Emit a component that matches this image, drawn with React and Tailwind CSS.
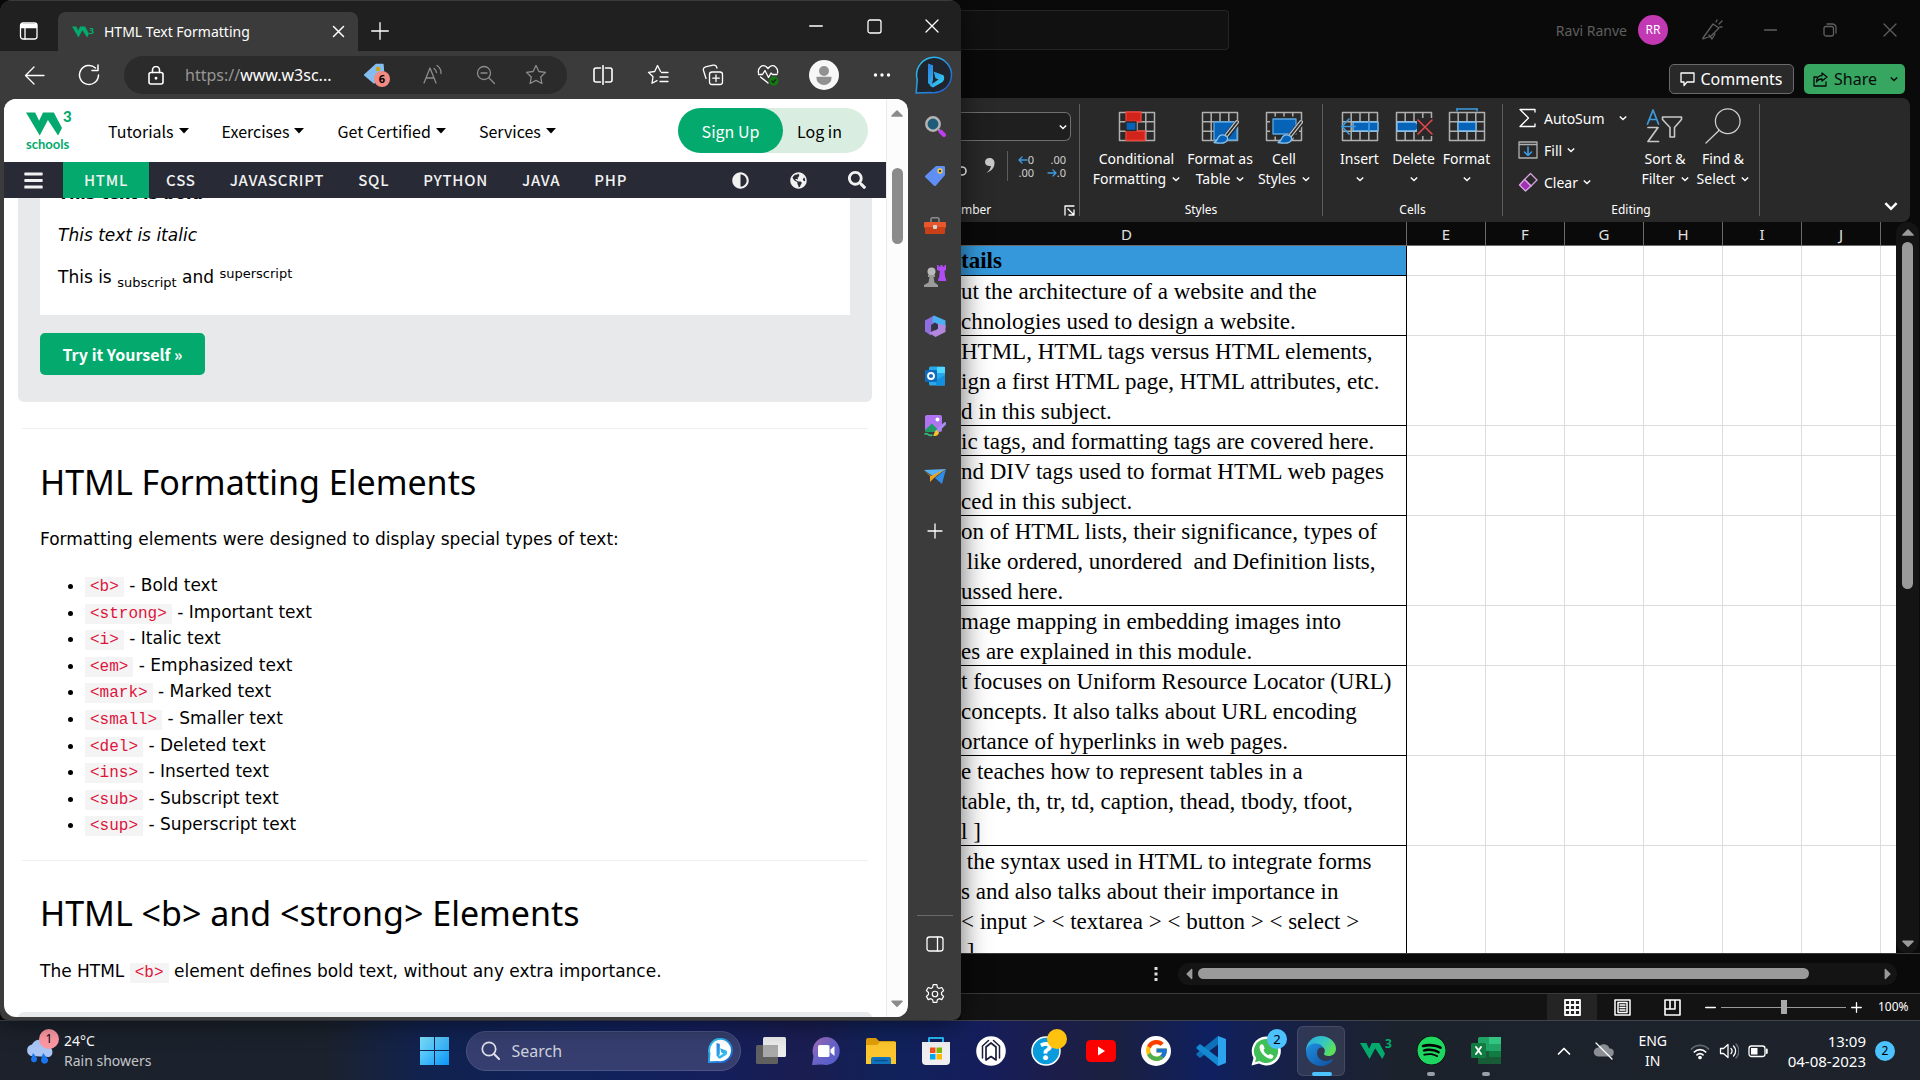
import React from "react";
import { FaAdjust, FaGlobeAmericas, FaSearch, FaBars, FaCaretDown, FaSpotify, FaCaretUp, FaCaretLeft, FaCaretRight } from "react-icons/fa";
import { FcGoogle } from "react-icons/fc";

function Svg({ w = 20, h, vb, children, className = "" }) {
  return (
    <svg width={w} height={h || w} viewBox={vb || `0 0 ${w} ${h || w}`} fill="none" stroke="currentColor" strokeWidth="1.3" strokeLinecap="round" strokeLinejoin="round" className={"shrink-0 " + className} aria-hidden="true">
      {children}
    </svg>
  );
}

function Chevron({ w = 8 }) {
  return (
    <svg width={w} height={w} viewBox="0 0 8 8" fill="none" stroke="currentColor" strokeWidth="1.4" className="inline-block shrink-0" aria-hidden="true">
      <path d="M.8 2.4 4 5.6 7.2 2.4" />
    </svg>
  );
}

function W3Mark({ w, h }) {
  return (
    <svg width={w} height={h} viewBox="0 0 110 72" aria-hidden="true" className="shrink-0">
      <path fill="#04aa6d" d="M0 1h28l12 25L52 1h33l25 47-12 23-31-47-25 47z" />
    </svg>
  );
}

/* ---------- Browser window ---------- */

function TitleBar() {
  return (
    <div className="flex h-[51px] items-end border-t border-[#3a3a3a] bg-[#202020]">
      <button aria-label="Tab actions" className="flex h-10 w-[58px] items-center justify-center">
        <Svg w={20}>
          <rect x="1.5" y="2" width="16.5" height="16" rx="2.5" />
          <path d="M2 3.5h15.5v3H2z" fill="currentColor" />
          <path d="M6 7v11" />
        </Svg>
      </button>
      <div className="flex h-[39px] w-[300px] items-center rounded-t-lg bg-[#3b3b3b] pr-2 pl-[14px]">
        <span className="flex w-8 items-start">
          <W3Mark w={17} h={12} />
          <span className="text-[9px] leading-[9px] font-bold text-[#04aa6d]">3</span>
        </span>
        <span className="flex-1 text-[14px]">HTML Text Formatting</span>
        <button aria-label="Close tab" className="px-1">
          <Svg w={15}><path d="M2.5 2.5l10 10M12.5 2.5l-10 10" strokeWidth="1.5" /></Svg>
        </button>
      </div>
      <button aria-label="New tab" className="flex h-10 w-[43px] items-center justify-center">
        <Svg w={18}><path d="M9 .7v16.6M.7 9h16.6" /></Svg>
      </button>
      <div className="ml-auto flex h-full">
        <button aria-label="Minimize" className="flex w-[58px] items-center justify-center">
          <Svg w={14}><path d="M.7 7h12.6" /></Svg>
        </button>
        <button aria-label="Maximize" className="flex w-[58px] items-center justify-center">
          <Svg w={15}><rect x="1" y="1" width="13" height="13" rx="2" /></Svg>
        </button>
        <button aria-label="Close" className="flex w-[58px] items-center justify-center">
          <Svg w={14}><path d="M1 1l12 12M13 1L1 13" /></Svg>
        </button>
      </div>
    </div>
  );
}

function BingBubble({ w, light }) {
  return (
    <svg width={w} height={w} viewBox="0 0 38 38" aria-hidden="true" className="shrink-0">
      <defs>
        <linearGradient id="bing-ring" x1="0" y1="0" x2="1" y2="1">
          <stop offset="0" stopColor="#2fd0f5" />
          <stop offset="1" stopColor="#1b55c9" />
        </linearGradient>
        <linearGradient id="bing-b" x1="0" y1="0" x2="1" y2="1">
          <stop offset="0" stopColor="#2a7de1" />
          <stop offset="1" stopColor="#35d3f3" />
        </linearGradient>
      </defs>
      <path d="M19.5 1.2A17.8 17.8 0 1 1 15 36.4L1.2 37l1-13.500A17.8 17.8 0 0 1 19.5 1.2z" fill={light ? "#fff" : "#20242c"} stroke="url(#bing-ring)" strokeWidth={light ? 3 : 1.5} />
      <path d="M13 7.5l5 1.8v14.500l-1.500 6L13 27.200zM18.500 15.500l10 3.800c1.500 3.500.5 5.500-1.500 7L18 31.500l-3.500-2 9-6-3-1.200z" fill="url(#bing-b)" />
    </svg>
  );
}

function Toolbar() {
  return (
    <div className="flex h-12 items-center">
      <button aria-label="Back" className="flex w-[68px] justify-center">
        <Svg w={21}><path d="M20 10.500H1.500M10 2l-8.500 8.500L10 19" /></Svg>
      </button>
      <button aria-label="Refresh" className="flex w-[42px] justify-center">
        <Svg w={22}><path d="M20.500 11a9.500 9.500 0 1 1-3-7M20 1v5.500h-6" strokeWidth="1.500" /></Svg>
      </button>
      <div className="ml-[14px] flex h-[38px] flex-1 items-center rounded-full bg-[#2b2b2b] pr-[20px] pl-6">
        <Svg w={16} h={19} vb="0 0 16 19"><rect x="1" y="6.500" width="14" height="11.500" rx="2" strokeWidth="1.600" /><path d="M4.500 6.500V4a3.500 3.500 0 0 1 7 0v2.500" strokeWidth="1.600" /><circle cx="8" cy="12.300" r=".8" fill="currentColor" /></Svg>
        <label className="ml-[21px] flex min-w-0 flex-1 text-[16px]">
          <span className="text-[#969696]">https://</span>
          <input aria-label="Address" defaultValue="www.w3sc..." className="w-[110px] min-w-0 bg-transparent text-white outline-none" />
        </label>
        <span className="flex items-center gap-[35px] text-[#8c8c8c]">
          <button aria-label="Coupons" className="relative">
            <Svg w={24}>
              <path d="M13 1.500h7l.5 6L11 20 1.500 12z" fill="#85bdf0" stroke="#85bdf0" />
              <circle cx="15" cy="6" r="2.300" fill="#c9a31c" stroke="none" />
            </Svg>
            <span className="absolute top-2 left-[11px] flex size-4 items-center justify-center rounded-full bg-[#f28b82] text-[11px] leading-4 font-bold text-black">6</span>
          </button>
          <button aria-label="Read aloud">
            <Svg w={22}><path d="M2 19L8 4l6 15M4.200 14h7.500M12 4.500a6 6 0 0 1 2.500 4M15 1.500a9 9 0 0 1 4 8" /></Svg>
          </button>
          <button aria-label="Zoom out" className="-ml-[3px]">
            <Svg w={20}><circle cx="8" cy="8" r="6.500" /><path d="M5 8h6M12.800 12.800L18.500 18.500" /></Svg>
          </button>
          <button aria-label="Favorite" className="-ml-[6px]">
            <Svg w={22}><path d="M11 1.500l2.900 6 6.600.9-4.800 4.600 1.200 6.500-5.900-3.100-5.900 3.100 1.200-6.500L1.500 8.400l6.600-.9z" /></Svg>
          </button>
        </span>
      </div>
      <div className="ml-2 flex items-center">
        <button aria-label="Split screen" className="flex w-[55px] justify-center">
          <Svg w={20}><path d="M7.500 3H3a2 2 0 0 0-2 2v10a2 2 0 0 0 2 2h4.500M12.500 3H17a2 2 0 0 1 2 2v10a2 2 0 0 1-2 2h-4.500M10 .7v18.600" strokeWidth="1.600" /></Svg>
        </button>
        <button aria-label="Favorites" className="flex w-[55px] justify-center">
          <Svg w={22}><path d="M13.500 7.500L10.500 1.500l-2.800 6-6.200.9 4.500 4.400-1 6.500 5-2.700M14.500 8.500H21M13 13h8M13 17.500h8" /></Svg>
        </button>
        <button aria-label="Collections" className="flex w-[55px] justify-center">
          <Svg w={22}><rect x="7.500" y="8" width="13" height="12.500" rx="2.500" /><path d="M14 11v6.500M10.800 14.200h6.500M4 14.500L1.500 6.500C1 4.500 2 3.200 3.500 2.800L11 1.200c2-.4 3.500.6 4 2.800" /></Svg>
        </button>
        <button aria-label="Browser essentials" className="flex w-[55px] justify-center">
          <Svg w={22}><path d="M1.500 9C.5 4 5 0 9 2.500L11 4.500l2-2c4-2.500 8.500 1.500 7.500 6.500M3.500 13l7.500 6M1.500 10.500h4l2.500-4 3.500 7 2.500-4.500 1.500 1.500h4.500" /><circle cx="16.800" cy="17" r="4.700" fill="#107c10" stroke="none" /><path d="M14.800 17l1.500 1.500 2.500-3" stroke="#222" /></Svg>
        </button>
        <button aria-label="Profile" className="flex w-[58px] justify-center">
          <Svg w={30}><circle cx="15" cy="15" r="15" fill="#f7f7f7" stroke="none" /><circle cx="15" cy="11" r="5" fill="#919191" stroke="none" /><path d="M8 17.500h14c0 9-14 9-14 0z" fill="#919191" stroke="#919191" /></Svg>
        </button>
        <button aria-label="Menu" className="flex w-[58px] justify-center">
          <Svg w={18} h={6}><g fill="currentColor" stroke="none"><circle cx="2.500" cy="3" r="1.700" /><circle cx="9" cy="3" r="1.700" /><circle cx="15.500" cy="3" r="1.700" /></g></Svg>
        </button>
        <button aria-label="Bing chat" className="flex w-[50px] justify-center pr-1"><BingBubble w={38} /></button>
      </div>
    </div>
  );
}

const siteMenus = ["Tutorials", "Exercises", "Get Certified", "Services"];
const siteTopics = ["CSS", "JAVASCRIPT", "SQL", "PYTHON", "JAVA", "PHP"];

function SiteHeader() {
  return (
    <header className="relative bg-white font-['Noto_Sans_CJK_SC',sans-serif] text-black">
      <div className="flex h-[63px] items-center pr-[18px] pl-[22px]">
        <a href="#home" aria-label="W3Schools home" className="flex w-[47px] flex-col pb-[2px] text-[#04aa6d]">
          <span className="flex items-start gap-px">
            <span className="pt-1"><W3Mark w={36} h={24} /></span>
            <span className="font-['Lato',sans-serif] text-[15px] leading-4 font-black">3</span>
          </span>
          <span className="font-['Lato',sans-serif] text-[13px] leading-4 font-bold">schools</span>
        </a>
        <nav className="ml-[35px] flex gap-[33px] text-[16px]">
          {siteMenus.map((m) => (
            <button key={m} className="flex items-center gap-[5px]">
              {m}
              <Svg w={10} h={6}><path d="M0 0h10L5 5.500z" fill="currentColor" stroke="none" /></Svg>
            </button>
          ))}
        </nav>
        <div className="ml-auto flex h-[45px] rounded-full bg-[#d9eee1] text-[16px]">
          <button className="w-[105px] rounded-full bg-[#04aa6d] text-white">Sign Up</button>
          <button className="w-[85px] pr-3">Log in</button>
        </div>
      </div>
      <nav className="flex h-9 items-stretch bg-[#282a35] text-[15px] font-medium tracking-wider text-[#f1f1f1]">
        <button aria-label="Menu" className="flex w-[59px] items-center justify-center"><FaBars size={21} /></button>
        <a href="#html" className="flex items-center bg-[#04aa6d] px-[21px]">HTML</a>
        {siteTopics.map((t) => (
          <a key={t} href={"#" + t.toLowerCase()} className="flex items-center px-[17px]">{t}</a>
        ))}
        <div className="ml-auto flex items-center gap-[41px] pr-5">
          <button aria-label="Contrast"><FaAdjust size={17} /></button>
          <button aria-label="Translate"><FaGlobeAmericas size={17} /></button>
          <button aria-label="Search site"><FaSearch size={18} /></button>
        </div>
      </nav>
    </header>
  );
}

function Code({ children }) {
  return <code className="bg-[#f4f4f4] px-[5px] py-px font-['Liberation_Mono',monospace] text-[16px] text-[#dc143c]">{children}</code>;
}

const tags = [
  ["<b>", "Bold text"], ["<strong>", "Important text"], ["<i>", "Italic text"], ["<em>", "Emphasized text"],
  ["<mark>", "Marked text"], ["<small>", "Smaller text"], ["<del>", "Deleted text"], ["<ins>", "Inserted text"],
  ["<sub>", "Subscript text"], ["<sup>", "Superscript text"],
];

function Article() {
  return (
    <article className="flex-1 overflow-hidden font-['DejaVu_Sans',sans-serif] text-[17px] leading-[27px] text-black">
      <div className="mx-[14px] rounded-b-md bg-[#e7e9eb] px-[22px] pb-[27px]">
        <div className="flex flex-col gap-[15px] bg-white px-[18px] pb-6">
          <p className="-mt-[18px] text-[16px] font-bold">This text is bold</p>
          <p className="italic">This text is italic</p>
          <p>This is <sub className="bottom-0 align-[-4px] text-[13px] leading-none">subscript</sub> and <sup className="top-0 align-[5px] text-[13px] leading-none">superscript</sup></p>
        </div>
        <button className="mt-[18px] flex h-[42px] w-[165px] items-center justify-center rounded-[5px] bg-[#04aa6d] font-['Noto_Sans_CJK_SC',sans-serif] text-[16px] font-bold text-white">Try it Yourself »</button>
      </div>
      <hr className="mx-[18px] mt-[26px] border-[#eeeeee]" />
      <div className="px-9">
        <h2 className="mt-[26px] font-['Noto_Sans',sans-serif] text-[34px] leading-[54px]">HTML Formatting Elements</h2>
        <p className="mt-[17px]">Formatting elements were designed to display special types of text:</p>
        <ul className="mt-[19px] grid h-[266px] list-disc auto-rows-fr pl-[45px]">
          {tags.map(([t, d]) => (
            <li key={t}><Code>{t}</Code> - {d}</li>
          ))}
        </ul>
      </div>
      <hr className="mx-[18px] mt-[22px] border-[#eeeeee]" />
      <div className="px-9">
        <h2 className="mt-[25px] font-['Noto_Sans',sans-serif] text-[34px] leading-[54px]">HTML &lt;b&gt; and &lt;strong&gt; Elements</h2>
        <p className="mt-[18px]">The HTML <Code>&lt;b&gt;</Code> element defines bold text, without any extra importance.</p>
      </div>
      <div className="mx-[14px] mt-[25px] h-8 rounded-t-md bg-[#e7e9eb]" />
    </article>
  );
}

const sideIcons = [
  ["Search", <><circle cx="9" cy="9" r="6.700" fill="#1d5b79" stroke="#b4b4b4" strokeWidth="2.500" /><path d="M14.500 14.500l1.500 1.500" stroke="#999" strokeWidth="2" /><path d="M16.500 16.500l3.500 3.500" stroke="#c23df0" strokeWidth="4" /></>],
  ["Shopping", <><path d="M12 1h7.500c1 0 1.500.5 1.500 1.500v7.500L12 20.500c-.7.800-1.500.8-2.200 0L1.500 12.500c-.8-.8-.7-1.500 0-2z" fill="#5f8ef5" stroke="none" /><circle cx="16" cy="6" r="2" fill="#29456b" stroke="#ffd338" /></>],
  ["Tools", <><path d="M7 7V4.500C7 3 7.500 2.700 8.500 2.700h5c1 0 1.500.3 1.500 1.800V7" stroke="#8a8a8a" strokeWidth="1.600" /><rect x="0" y="7" width="22" height="6" rx="1" fill="#e8582c" stroke="none" /><path d="M1 12h20v6a1 1 0 0 1-1 1H2a1 1 0 0 1-1-1z" fill="#c93f17" stroke="none" /><rect x="9" y="10" width="4" height="4" rx="1" fill="#d4d4d4" stroke="none" /></>],
  ["Games", <><path d="M13 0h1.500v1.500h2V0h2v1.500h2V0H22v5l-1.500 1 .7 6.500 1 1.500v2h-8v-2l1-1.500.7-6.500-2.900-1z" fill="#b04cf5" stroke="none" /><circle cx="7.500" cy="6.500" r="4" fill="#b9b9b9" stroke="none" /><path d="M4 10h7v2H9.500l1 5.500 3.500 2.500v2H0v-2l4.500-2.500 1-5.500H4z" fill="#9a9a9a" stroke="none" /></>],
  ["Microsoft 365", <><path d="M10 .5L1 5.500v11l6 4V10l6-2.500V3z" fill="#8f6fe0" stroke="none" /><path d="M10 .5l11.500 5v7.500l-7.500-3.500-5.500-2.500V3z" fill="#49b0f2" stroke="none" /><path d="M21.500 10v7L11.500 22 5 18l9-4.500V9z" fill="#b387dd" stroke="none" /><path d="M11 7.500l3 2v4L11 15.500l-3-2v-4z" fill="#30344a" stroke="none" /></>],
  ["Outlook", <><rect x="5" y="1.500" width="16" height="19" rx="1.500" fill="#28a8ea" stroke="none" /><path d="M13 2h8v6h-8z" fill="#50d9ff" stroke="none" /><path d="M21 10l-9 5v5.500h9z" fill="#1490df" stroke="none" /><rect x="1" y="5" width="12" height="12" rx="1" fill="#0f6cbd" stroke="none" /><circle cx="7" cy="11" r="3" stroke="#fff" strokeWidth="1.800" /></>],
  ["Image creator", <><rect x="1" y="0" width="17" height="17" rx="2" fill="#b074f0" stroke="none" /><path d="M1 15l7-6.500 8 8.500H2z" fill="#1d9b63" stroke="none" /><circle cx="13.500" cy="4.500" r="2" fill="#fff" stroke="none" /><path d="M21 8.500l-8 8" stroke="#a98bf2" strokeWidth="3" /><path d="M12.500 15l2.500 2.500c-1 4-4 4-6 3 1.500-1 1-4 3.500-5.500z" fill="#f7c12e" stroke="none" /><path d="M1 19c3-2 3 3 7 1" stroke="#2fbd7c" strokeWidth="1.600" /></>],
  ["Drop", <><path d="M0 5l22-1-12 8z" fill="#57b3f7" stroke="none" /><path d="M0 5l7 6 14-7-11 9-4 4V11z" fill="#f2a21d" stroke="none" /><path d="M22 4l-4 15-7-6z" fill="#2f8de8" stroke="none" /></>],
];

function Sidebar() {
  return (
    <aside className="flex w-[53px] shrink-0 flex-col items-center pt-[2px]">
      {sideIcons.map(([name, art]) => (
        <button key={name} aria-label={name} className="flex h-[50px] w-full items-center justify-center"><Svg w={22}>{art}</Svg></button>
      ))}
      <button aria-label="Customize" className="mt-[5px] flex h-[50px] w-full items-center justify-center">
        <Svg w={16}><path d="M8 1v14M1 8h14" /></Svg>
      </button>
      <div className="mt-auto mb-[3px] h-px w-9 bg-[#6a6a6a]" />
      <button aria-label="Toggle sidebar" className="flex h-[50px] w-full items-center justify-center">
        <Svg w={20}><rect x="2" y="3" width="16" height="14" rx="2.500" /><path d="M12.500 3v14" /></Svg>
      </button>
      <button aria-label="Settings" className="mb-px flex h-[50px] w-full items-center justify-center">
        <Svg w={22} vb="0 0 24 24"><circle cx="12" cy="12" r="3" /><path d="M10 1.800h4l.6 3 1.900 1.100 2.900-1 2 3.400-2.300 2v2.300l2.300 2-2 3.500-2.900-1-1.900 1.100-.6 3h-4l-.6-3-1.900-1.100-2.900 1-2-3.500 2.300-2v-2.300l-2.300-2 2-3.400 2.900 1 1.900-1.100z" /></Svg>
      </button>
    </aside>
  );
}

function Browser() {
  return (
    <section className="relative z-10 flex w-[calc(50%+1px)] shrink-0 flex-col overflow-hidden rounded-t-xl rounded-b-lg bg-[#3b3b3b] text-white shadow-[0_0_28px_rgba(0,0,0,0.6)]">
      <TitleBar />
      <Toolbar />
      <div className="flex min-h-0 flex-1">
        <div className="mb-[3px] ml-1 flex min-w-0 flex-1 overflow-hidden rounded-xl bg-white">
          <div className="flex min-w-0 flex-1 flex-col">
            <SiteHeader />
            <Article />
          </div>
          <div className="mr-px flex w-[21px] flex-col items-center border-l border-[#ececec] bg-[#fcfcfc] py-1 text-[#8b8b8b]">
            <FaCaretUp size={20} />
            <div className="mt-[45px] h-[76px] w-[11px] rounded-full bg-[#8b8b8b]" />
            <FaCaretDown size={20} className="mt-auto" />
          </div>
        </div>
        <Sidebar />
      </div>
    </section>
  );
}

/* ---------- Spreadsheet window ---------- */

function TableIcon({ children }) {
  return (
    <Svg w={38} h={36} vb="0 0 38 36">
      <path d="M1.500 4.500h35v28h-35zM1.500 13.800h35M1.500 23.200h35M10.200 4.500v28M19 4.500v28M27.800 4.500v28" stroke="#b0b0b0" strokeWidth="1.500" strokeLinecap="butt" />
      {children}
    </Svg>
  );
}

const brush = (
  <>
    <path d="M36 15L24 30" stroke="#292929" strokeWidth="6" />
    <path d="M36 14L25 28" stroke="#c8c8c8" strokeWidth="4" />
    <path d="M36 14L25 28" stroke="#292929" strokeWidth="1.600" />
    <path d="M24 27.500c2 .5 3 2 2.500 4-1 4-8 4-13.500 3 3-1 3-3 4.500-5.500 1.500-2 4-2.500 6.500-1.500z" fill="#0763b8" stroke="#86c2ee" />
  </>
);

function BigButton({ icon, top, bottom, className }) {
  return (
    <button className={"flex flex-col items-center text-center text-[14px] leading-5 whitespace-nowrap " + className}>
      {icon}
      <span className="mt-[5px]">{top}</span>
      <span className="flex h-5 items-center gap-[6px]">{bottom}<Chevron /></span>
    </button>
  );
}

function Group({ label, className, children, extra }) {
  return (
    <div className={"flex shrink-0 flex-col border-r border-[#5c5c5c] pt-1 " + className}>
      <div className="flex min-h-0 flex-1">{children}</div>
      <div className="relative text-center text-[12px] leading-3">{label}{extra}</div>
    </div>
  );
}

function Ribbon() {
  return (
    <div className="mr-[10px] flex h-[124px] rounded-tr-lg rounded-br-lg bg-[#292929] py-[6px] text-white">
      <Group label={<span className="block pr-8 text-left">mber</span>} className="w-[119px]" extra={
        <button aria-label="Number format settings" className="absolute right-1 bottom-0">
          <Svg w={11}><path d="M1 10V1h9M4 4l6 6M10 5v5H5" /></Svg>
        </button>
      }>
        <div className="flex flex-col">
          <div className="relative mt-1 flex h-[29px]">
            <select aria-label="Number format" className="h-[29px] w-[110px] appearance-none rounded-r-md border border-l-0 border-[#6f6f6f] bg-[#1f1f1f] outline-none" defaultValue=""><option value=""></option></select>
            <span className="pointer-events-none absolute inset-y-0 right-1 flex items-center"><Chevron /></span>
          </div>
          <div className="mt-[10px] flex h-[30px] items-center">
            <button aria-label="Percent" className="w-3"><Svg w={6} h={20}><circle cx="1" cy="15" r="4" strokeWidth="1.600" /></Svg></button>
            <button aria-label="Comma style" className="flex w-[34px] justify-center">
              <Svg w={12} h={18}><path d="M5.500 1C2.500 1 1 3 1 5c0 2.500 2 4 4.500 4 .7 0 1 0 1.500-.3-.5 3-2 5-4.500 7C8 14 10.500 10 10.500 6c0-3-2-5-5-5z" fill="#c8c8c8" stroke="none" /></Svg>
            </button>
            <span className="h-[30px] w-px bg-[#5c5c5c]" />
            <button aria-label="Increase decimal" className="flex w-[26px] flex-col items-end text-[11px] leading-[13px] text-[#d0d0d0]">
              <span className="flex items-center"><Svg w={10} h={8} className="text-[#3d9be0]"><path d="M9 4H1M4 1L1 4l3 3" /></Svg>0</span>
              <span>.00</span>
            </button>
            <button aria-label="Decrease decimal" className="flex w-8 flex-col items-end text-[11px] leading-[13px] text-[#d0d0d0]">
              <span>.00</span>
              <span className="flex items-center"><Svg w={10} h={8} className="text-[#3d9be0]"><path d="M1 4h8M6 1l3 3-3 3" /></Svg>.0</span>
            </button>
          </div>
        </div>
      </Group>
      <Group label="Styles" className="w-[243px]">
        <BigButton className="ml-[6px] w-[101px]" top="Conditional" bottom="Formatting" icon={
          <TableIcon><path d="M8 4h15v9.500H8zM8 23h19v9.500H8z" fill="#d3241b" stroke="#f0433a" /><path d="M8 14h10v8.500H8z" fill="#0763b8" stroke="#292929" /></TableIcon>
        } />
        <BigButton className="w-[66px]" top="Format as" bottom="Table" icon={<TableIcon><path d="M13 14h23v18H13z" fill="#0763b8" stroke="#5aa7e4" />{brush}</TableIcon>} />
        <BigButton className="w-[62px]" top="Cell" bottom="Styles" icon={<TableIcon><path d="M6.500 10h26v17h-26z" fill="#0763b8" stroke="#292929" strokeWidth="3" /><path d="M8 11h23v15H8z" fill="#0763b8" stroke="#5aa7e4" />{brush}</TableIcon>} />
      </Group>
      <Group label="Cells" className="w-[180px]">
        <BigButton className="ml-[9px] w-[55px]" top="Insert" bottom="" icon={<TableIcon><path d="M12 14h25v9H12z" fill="#0763b8" stroke="#86c2ee" /><path d="M28 14v9M14 18.500H1M8 11l-7 7.500L8 26" stroke="#3d9be0" strokeWidth="1.700" /></TableIcon>} />
        <BigButton className="w-[53px]" top="Delete" bottom="" icon={<TableIcon><path d="M2 14h18l6 4.500-6 4.500H2z" fill="#0763b8" stroke="#86c2ee" /><path d="M22 10h16v18H22z" fill="#292929" stroke="none" /><path d="M23 12l14 14M37 12L23 26" stroke="#e5484d" strokeWidth="1.500" /></TableIcon>} />
        <BigButton className="w-[53px]" top="Format" bottom="" icon={<TableIcon><path d="M10 14h18v9H10z" fill="#0763b8" stroke="#86c2ee" /><path d="M9 1h20M9-1v4M29-1v4" stroke="#3d9be0" strokeWidth="1.500" /></TableIcon>} />
      </Group>
      <Group label="Editing" className="w-[257px]">
        <div className="ml-[15px] flex w-[109px] flex-col text-[14px]">
          <button className="flex h-5 items-center"><span className="w-[26px]"><Svg w={18} h={20}><path d="M17 4V1.500H2L10.500 10 2 18.500h15V16" /></Svg></span>AutoSum<span className="ml-auto flex"><Chevron /></span></button>
          <button className="mt-3 flex h-5 items-center"><span className="w-[26px]"><Svg w={20} h={18}><path d="M1 1h18v16H1zM1 3.500h18" stroke="#b0b0b0" /><path d="M10 6v8.500M6.500 11l3.500 3.500 3.500-3.500" stroke="#3d9be0" strokeWidth="1.600" /></Svg></span>Fill<span className="ml-[5px] flex"><Chevron /></span></button>
          <button className="mt-3 flex h-5 items-center"><span className="w-[26px]"><Svg w={20}><path d="M12.500 1.500L19 8l-6 6-6.500-6.500z" stroke="#d9a3e0" /><path d="M6.500 7.500L13 14l-5.500 5L1.500 13z" fill="#a033b3" stroke="#e0a6e8" /></Svg></span>Clear<span className="ml-[5px] flex"><Chevron /></span></button>
        </div>
        <BigButton className="ml-[10px] w-[56px]" top="Sort &" bottom="Filter" icon={
          <Svg w={38} h={36} vb="0 0 38 36"><path d="M1.500 16L7 2l5.500 14M3.500 11.500h7" stroke="#3d9be0" strokeWidth="1.700" /><path d="M2 19.500h10L2 33.500h10.500" stroke="#c8c8c8" strokeWidth="1.700" /><path d="M16.500 9h19v2.500l-7 8v9.500h-4.500v-9.500l-7.500-8z" stroke="#c8c8c8" strokeWidth="1.600" /></Svg>
        } />
        <BigButton className="w-[60px]" top="Find &" bottom="Select" icon={
          <Svg w={36} h={36} vb="0 0 38 38"><circle cx="24" cy="14" r="13" stroke="#d0d0d0" /><path d="M15 23.500L1 37" stroke="#d0d0d0" /></Svg>
        } />
      </Group>
      <button aria-label="Collapse ribbon" className="mr-3 mb-0 ml-auto self-end"><Chevron w={14} /></button>
    </div>
  );
}

const letters = ["E", "F", "G", "H", "I", "J"];
const rows = [
  ["ut the architecture of a website and the\nchnologies used to design a website.", "h-[60px]"],
  ["HTML, HTML tags versus HTML elements,\nign a first HTML page, HTML attributes, etc.\nd in this subject.", "h-[90px]"],
  ["ic tags, and formatting tags are covered here.", "h-[30px]"],
  ["nd DIV tags used to format HTML web pages\nced in this subject.", "h-[60px]"],
  ["on of HTML lists, their significance, types of\n like ordered, unordered  and Definition lists,\nussed here.", "h-[90px]"],
  ["mage mapping in embedding images into\nes are explained in this module.", "h-[60px]"],
  ["t focuses on Uniform Resource Locator (URL)\nconcepts. It also talks about URL encoding\nortance of hyperlinks in web pages.", "h-[90px]"],
  ["e teaches how to represent tables in a\ntable, th, tr, td, caption, thead, tbody, tfoot,\nl ]", "h-[90px]"],
  [" the syntax used in HTML to integrate forms\ns and also talks about their importance in\n< input > < textarea > < button > < select >\n ]", "h-[120px]"],
];

function Sheet() {
  return (
    <div className="flex min-h-0 flex-1">
      <div className="min-w-0 flex-1 overflow-hidden">
        <table className="w-full table-fixed border-separate border-spacing-0">
          <colgroup>
            <col />
            {letters.map((l) => <col key={l} className="w-[79px]" />)}
            <col className="w-[15px]" />
          </colgroup>
          <thead>
            <tr className="h-6 text-[15px] leading-[22px] text-[#e0e0e0]">
              <th className="border-r border-b border-[#6a6a6a] p-0 pr-[114px] text-center font-normal">D</th>
              {letters.map((l) => <th key={l} className="border-r border-b border-[#6a6a6a] p-0 font-normal">{l}</th>)}
              <th className="border-b border-[#6a6a6a] p-0" />
            </tr>
          </thead>
          <tbody className="bg-white font-['Liberation_Serif',serif] text-[23px] leading-[29px] text-black">
            <tr className="h-[30px]">
              <td className="overflow-hidden border-r border-b border-black bg-[#3498db] p-0 font-bold">tails</td>
              {letters.map((l) => <td key={l} className="border-r border-b border-[#dcdcdc] p-0" />)}
              <td className="border-b border-[#dcdcdc] p-0" />
            </tr>
            {rows.map(([text, h]) => (
              <tr key={text} className={h}>
                <td className="overflow-hidden border-r border-b border-black p-0 align-top leading-[30px] whitespace-pre"><div className="-mb-[2px] pt-px">{text}</div></td>
                {letters.map((l) => <td key={l} className="border-r border-b border-[#dcdcdc] p-0" />)}
                <td className="border-b border-[#dcdcdc] p-0" />
              </tr>
            ))}
          </tbody>
        </table>
      </div>
      <div className="mr-px flex w-[23px] flex-col items-center rounded-full bg-[#141414] text-[#9a9a9a]">
        <FaCaretUp size={20} />
        <div className="h-[347px] w-[11px] rounded-full bg-[#9a9a9a]" />
        <FaCaretDown size={20} className="mt-auto" />
      </div>
    </div>
  );
}

function Excel() {
  return (
    <section className="flex min-w-0 flex-1 flex-col bg-[#0a0a0a] text-white">
      <div className="flex h-[60px] items-start">
        <div className="mt-[10px] h-10 w-[268px] rounded-r border border-l-0 border-[#242424] bg-[#111111]" />
        <div className="mt-[15px] ml-auto flex h-[30px] items-center text-[#5f5f5f]">
          <span className="text-[14px]">Ravi Ranve</span>
          <span className="ml-[11px] flex size-[30px] items-center justify-center rounded-full bg-[#c239b3] text-[12px] text-white">RR</span>
          <button aria-label="Drawing" className="ml-[33px]"><Svg w={22}><path d="M2 19L12 5l6 4-8 8-8 3zM8 16l3 4 3-5M15 3l1-2M18 5l3-3M19 8h2" /></Svg></button>
          <button aria-label="Minimize window" className="ml-[17px] flex w-[60px] justify-center"><Svg w={13}><path d="M.5 6h12" /></Svg></button>
          <button aria-label="Restore window" className="flex w-[60px] justify-center"><Svg w={14}><rect x="1" y="3.500" width="9.500" height="9.500" rx="2" /><path d="M4 1h5.500A3.500 3.500 0 0 1 13 4.500V10" /></Svg></button>
          <button aria-label="Close window" className="flex w-[60px] justify-center"><Svg w={14}><path d="M1 1l12 12M13 1L1 13" /></Svg></button>
        </div>
      </div>
      <div className="flex h-[38px] items-start justify-end gap-[10px] pt-1 pr-[15px] text-[16px]">
        <button className="flex h-[30px] w-[125px] items-center justify-center gap-[5px] rounded-[5px] border border-[#6a6a6a] bg-[#292929]">
          <Svg w={15}><path d="M1 1h13v9H7l-3 3.500V10H1z" /></Svg>Comments
        </button>
        <span className="flex h-[30px] w-[101px] items-center rounded-[5px] bg-[#36a661] pl-[9px] text-[#0a0a0a]">
          <button className="flex items-center gap-[6px]"><Svg w={15}><path d="M4 5H1v9h12v-4M9 1l5 4-5 4V7C6 7 4.500 8 3.500 10 3.500 6 6 3.500 9 3.500z" /></Svg>Share</button>
          <button aria-label="Share options" className="mr-[7px] ml-auto flex"><Chevron /></button>
        </span>
      </div>
      <Ribbon />
      <Sheet />
      <div className="flex h-10 items-center border-t border-[#3a3a3a]">
        <Svg w={4} h={16} className="mr-5 ml-auto"><g fill="#ddd" stroke="none"><rect x=".5" y="1" width="3" height="3" /><rect x=".5" y="6.500" width="3" height="3" /><rect x=".5" y="12" width="3" height="3" /></g></Svg>
        <div className="mr-[23px] flex h-[22px] w-[719px] items-center rounded-full bg-[#141414] pl-[2px] text-[#9a9a9a]">
          <FaCaretLeft size={18} />
          <div className="h-[11px] w-[611px] rounded-full bg-[#9a9a9a]" />
          <FaCaretRight size={18} className="ml-auto" />
        </div>
      </div>
      <div className="flex h-[27px] items-center justify-end border-t border-[#3a3a3a] bg-[#131313] pr-[10px]">
        <button aria-label="Normal view" className="flex h-full w-[50px] items-center justify-center bg-[#242424]"><Svg w={17}><path d="M1 1h15v15H1zM1 6h15M1 11h15M6 1v15M11 1v15" strokeWidth="1.800" /></Svg></button>
        <button aria-label="Page layout" className="flex w-[50px] justify-center"><Svg w={17}><path d="M1 1h15v15H1zM4 3.500h9v10H4zM6 6h5M6 8.500h5M6 11h5" strokeWidth="1.500" /></Svg></button>
        <button aria-label="Page break view" className="flex w-[50px] justify-center"><Svg w={17}><path d="M1 1h15v15H1zM6 1v9M11 1v9M1 10h10" strokeWidth="1.600" /></Svg></button>
        <button aria-label="Zoom out sheet" className="ml-2 flex"><Svg w={11}><path d="M.7 5.500h9.600" strokeWidth="1.500" /></Svg></button>
        <input type="range" aria-label="Zoom" min="0" max="200" defaultValue="100" className="mx-[5px] h-px w-[125px] appearance-none bg-[#9a9a9a] [&::-webkit-slider-thumb]:h-[14px] [&::-webkit-slider-thumb]:w-[6px] [&::-webkit-slider-thumb]:appearance-none [&::-webkit-slider-thumb]:bg-[#a8a8a8]" />
        <button aria-label="Zoom in sheet" className="flex"><Svg w={11}><path d="M.7 5.500h9.600M5.500.7v9.600" /></Svg></button>
        <span className="ml-4 w-[32px] text-[12px]">100%</span>
      </div>
    </section>
  );
}

/* ---------- Taskbar ---------- */

function AppButton({ label, children, active, running, badge }) {
  return (
    <button aria-label={label} className="flex w-[55px] justify-center">
      <span className={"relative flex h-[50px] w-12 items-center justify-center rounded-md " + (active ? "border border-white/10 bg-white/10" : "")}>
        {children}
        {badge}
        {active && <span className="absolute -bottom-px left-[14px] h-1 w-5 rounded-full bg-[#4cc2ff]" />}
        {running && <span className="absolute bottom-0 left-5 h-1 w-2 rounded-full bg-[#9a9ea6]" />}
      </span>
    </button>
  );
}

function Taskbar() {
  return (
    <footer className="grid h-[60px] shrink-0 grid-cols-[1fr_auto_1fr] items-center border-t border-[#3f434c] bg-[linear-gradient(90deg,#1c212b_0%,#1b222d_17%,#11224f_22%,#10225a_30%,#141f5c_37%,#1a1d50_42%,#10225a_46%,#151e5c_51%,#1c1e4a_55%,#1b203f_58%,#0f2060_63%,#182142_68%,#1c222b_73%,#1d222b_100%)] text-white">
      <button className="relative flex items-center pl-[24px] text-left text-[14px] leading-5">
        <Svg w={32} h={32}>
          <path d="M7 21a6 6 0 0 1 1-11.500 8.500 8.500 0 0 1 16 2A5.500 5.500 0 0 1 25 22z" fill="#a9c6f7" stroke="none" />
          <path d="M9 18l4 5c1 5-6 6-6 1zM19 18l5 6c1 6-7 6-7 1z" fill="#1b74f0" stroke="none" />
        </Svg>
        <span className="absolute top-[-2px] left-[39px] flex size-5 items-center justify-center rounded-full bg-[#ff99a4] text-[12px] leading-5 text-black">1</span>
        <span className="ml-2">24°C<br /><span className="text-[#c4c6ca]">Rain showers</span></span>
      </button>
      <div className="flex items-center">
        <AppButton label="Start">
          <Svg w={29}>
            <defs><linearGradient id="win" x1="0" y1="0" x2="1" y2="1"><stop offset="0" stopColor="#7fe3fd" /><stop offset="1" stopColor="#0a94f5" /></linearGradient></defs>
            <path d="M0 1h14v13H0zM15 1h14v13H15zM0 15h14v14H0zM15 15h14v14H15z" fill="url(#win)" stroke="none" />
          </Svg>
        </AppButton>
        <label className="mr-[3px] ml-1 flex h-10 w-[275px] items-center rounded-full border border-[#4b5484] bg-[#353e6e] pr-[7px] pl-[14px] text-[#e0e2ea]">
          <Svg w={19}><circle cx="8" cy="8" r="6.700" strokeWidth="1.700" /><path d="M12.800 12.800L18 18" strokeWidth="2" /></Svg>
          <input aria-label="Search" placeholder="Search" className="ml-3 min-w-0 flex-1 bg-transparent text-[16px] outline-none placeholder:text-[#cfd1dc]" />
          <BingBubble w={25} light />
        </label>
        <AppButton label="Task view"><Svg w={30}><rect x="0" y="9" width="22" height="19" rx="1.500" fill="#606060" stroke="none" /><rect x="7" y="1" width="23" height="20" rx="1.500" fill="#ececec" stroke="none" /><path d="M7 9h15v12H7z" fill="#a9a9a9" stroke="none" /></Svg></AppButton>
        <AppButton label="Chat"><Svg w={30}>
          <defs><linearGradient id="chat" x1="0" y1="0" x2="1" y2="1"><stop offset="0" stopColor="#a56bb5" /><stop offset=".5" stopColor="#6a63c9" /><stop offset="1" stopColor="#5059c9" /></linearGradient></defs>
          <path d="M15 1a14 14 0 1 1-4 27.500L1 29l1.500-9A14 14 0 0 1 15 1z" fill="url(#chat)" stroke="none" /><rect x="7" y="9" width="11.500" height="12" rx="1.500" fill="#fff" stroke="none" /><path d="M19.500 13.500L23.500 10v10l-4-3.500z" fill="#fff" stroke="none" />
        </Svg></AppButton>
        <AppButton label="File Explorer"><Svg w={30}><path d="M0 4a2 2 0 0 1 2-2h8l3 3h15a2 2 0 0 1 2 2v4H0z" fill="#e3a008" stroke="none" /><path d="M0 9h11l3-3h16v22H0z" fill="#fdc62f" stroke="none" /><path d="M5 28v-5a2 2 0 0 1 2-2h16a2 2 0 0 1 2 2v5z" fill="#0f73c0" stroke="none" /><path d="M9 24.500h12" stroke="#0a4f8c" /></Svg></AppButton>
        <AppButton label="Microsoft Store"><Svg w={30}><path d="M8 7V2h14v5" stroke="#26b4ee" strokeWidth="2" /><path d="M1 6h28v19a4 4 0 0 1-4 4H5a4 4 0 0 1-4-4z" fill="#efefef" stroke="none" /><path d="M9 11.500h5.500V17H9z" fill="#f25022" stroke="none" /><path d="M15.500 11.500H21V17h-5.500z" fill="#7fba00" stroke="none" /><path d="M9 18h5.500v5.500H9z" fill="#00a4ef" stroke="none" /><path d="M15.500 18H21v5.500h-5.500z" fill="#ffb900" stroke="none" /></Svg></AppButton>
        <AppButton label="Reader"><Svg w={30}><circle cx="15" cy="15" r="14.800" fill="#fff" stroke="none" /><path d="M10 24V11l5-4 5 4v13l-5-3.500z" fill="#fff" stroke="#1b1d3a" strokeWidth="1.700" /><path d="M6.500 22V10l6-5.500M23.500 22V10l-6-5.500" stroke="#1b1d3a" strokeWidth="1.500" /></Svg></AppButton>
        <AppButton label="Help" badge={<span className="absolute top-[3px] left-[25px] size-5 rounded-full bg-[#ffc20e]" />}>
          <Svg w={30}><circle cx="15" cy="15" r="14" fill="#0a9bdc" stroke="#fff" strokeWidth="1.500" /></Svg>
          <span className="absolute text-[24px] leading-none font-black">?</span>
        </AppButton>
        <AppButton label="YouTube"><Svg w={30}><rect x="0" y="4" width="30" height="22" rx="4.500" fill="#f00" stroke="none" /><path d="M12 10.500l7 4.500-7 4.500z" fill="#fff" stroke="none" /></Svg></AppButton>
        <AppButton label="Google"><span className="flex size-[30px] items-center justify-center rounded-full bg-white"><FcGoogle size={25} /></span></AppButton>
        <AppButton label="VS Code"><Svg w={30}><path d="M22 0l8 3v24l-8 3z" fill="#2ba3ee" stroke="none" /><path d="M22 0v8.500L4 22l-3.500-3V17.500z" fill="#0d70b8" stroke="none" /><path d="M22 30v-8.500L4 8 .5 11v1.500z" fill="#1588d4" stroke="none" /></Svg></AppButton>
        <AppButton label="WhatsApp" badge={<span className="absolute top-[3px] left-[25px] flex size-5 items-center justify-center rounded-full bg-[#4cc2ff] text-[13px] leading-5 text-black">2</span>}>
          <Svg w={30}><path d="M15 .5a14.500 14.500 0 1 1-7 27L.5 29.500l2-7.500A14.500 14.500 0 0 1 15 .5z" fill="#fff" stroke="none" /><path d="M15 3a12 12 0 1 1-6.500 22L4 26.300 5.200 22A12 12 0 0 1 15 3z" fill="#3fbf55" stroke="none" /><path d="M10 8.500c-3 2-1 7 2.500 10.500s8 5 9.500 2.500c1-1.500.5-2-2.500-3.500-1-.5-1.500 1.500-2.500 1-2-1-4-3-4.500-5 0-.7 1.500-1 1-2-1-3-1.500-4.500-3.500-3.500z" fill="#fff" stroke="none" /></Svg>
        </AppButton>
        <AppButton label="Microsoft Edge" active><Svg w={30}>
          <defs>
            <linearGradient id="edge-top" x1="0" y1="0" x2="1" y2=".5"><stop offset="0" stopColor="#2aa7e8" /><stop offset=".6" stopColor="#35c7c0" /><stop offset="1" stopColor="#5ddf5b" /></linearGradient>
            <linearGradient id="edge-low" x1="0" y1="0" x2="1" y2="1"><stop offset="0" stopColor="#1f8fe0" /><stop offset="1" stopColor="#0f4fa0" /></linearGradient>
          </defs>
          <path d="M0 15C0 6 7 0 15 0s15 6 15 12.500c0 5-3.500 7.500-7.500 7.500-3 0-5-1-4.500-2.500 2-2.500.5-7-4-7S2 12 0 15z" fill="url(#edge-top)" stroke="none" />
          <path d="M0 15c1-5 5-7.500 9.500-7.500 4 0 7 1.800 8 4.500-3-1.500-6.500.5-6.500 5 0 6 6.500 9.500 12 7.500 2-.7 3.500-1.500 4.500-1.500C25.500 27 20.500 30 15 30 6.500 30 0 23.500 0 15z" fill="url(#edge-low)" stroke="none" />
        </Svg></AppButton>
        <AppButton label="W3Schools"><span className="flex items-start"><W3Mark w={25} h={18} /><span className="-mt-1 text-[12px] leading-3 font-bold text-[#04aa6d]">3</span></span></AppButton>
        <AppButton label="Spotify" running><FaSpotify size={29} color="#1ed760" className="rounded-full bg-black" /></AppButton>
        <AppButton label="Excel" running><Svg w={30}><rect x="7" y="1" width="23" height="27" rx="1.500" fill="#21a366" stroke="none" /><path d="M18 1h12v7H18z" fill="#33c481" stroke="none" /><path d="M7 15h23v13H7z" fill="#185c37" stroke="none" /><path d="M18 15h12v6H18z" fill="#107c41" stroke="none" /><rect x="0" y="7" width="15" height="15" rx="1.500" fill="#107c41" stroke="none" /><path d="M5 11l5 7M10 11l-5 7" stroke="#fff" strokeWidth="1.900" /></Svg></AppButton>
      </div>
      <div className="flex items-center justify-end pr-[25px] text-[14px] leading-5">
        <button aria-label="Hidden icons"><Svg w={14}><path d="M1.500 10L7 4.500 12.500 10" strokeWidth="1.700" /></Svg></button>
        <button aria-label="OneDrive" className="ml-[22px]"><Svg w={22}><path d="M5 16.500a4.500 4.500 0 0 1 .5-9 6 6 0 0 1 11 1 4 4 0 0 1 .5 8z" fill="#8b8e94" stroke="none" /><path d="M3 3l16 16" stroke="#fff" /></Svg></button>
        <button className="ml-[22px] w-[32px] text-center">ENG<br />IN</button>
        <button aria-label="Network, sound and battery" className="ml-[21px] flex items-center gap-[9px]">
          <Svg w={20}><path d="M1.500 8a12 12 0 0 1 17 0" stroke="#60656e" strokeWidth="1.800" /><path d="M4.300 11a8 8 0 0 1 11.400 0M7 13.800a4.200 4.200 0 0 1 6 0" strokeWidth="1.700" /><circle cx="10" cy="16.500" r="1.200" fill="#fff" /></Svg>
          <Svg w={20}><path d="M1.500 7.500v5h3l4.500 4V3.500l-4.500 4zM12 7.500a3.500 3.500 0 0 1 0 5M14.500 5a7 7 0 0 1 0 10" /><path d="M17 3a10 10 0 0 1 0 14" stroke="#6b6f78" /></Svg>
          <Svg w={20}><rect x="1" y="5" width="16" height="10.500" rx="2.500" /><rect x="3" y="7" width="6.500" height="6.500" fill="#fff" stroke="none" /><path d="M18.800 8.500v3.500" strokeWidth="1.800" /></Svg>
        </button>
        <button className="ml-[20px] text-right text-[15px]">13:09<br />04-08-2023</button>
        <span className="ml-[9px] flex size-5 items-center justify-center rounded-full bg-[#4cc2ff] text-[12px] leading-5 text-black">2</span>
      </div>
    </footer>
  );
}

export default function App() {
  return (
    <div className="flex h-screen flex-col overflow-hidden bg-[#0a0a0a] font-['Noto_Sans',sans-serif]">
      <main className="flex min-h-0 flex-1">
        <Browser />
        <Excel />
      </main>
      <Taskbar />
    </div>
  );
}
